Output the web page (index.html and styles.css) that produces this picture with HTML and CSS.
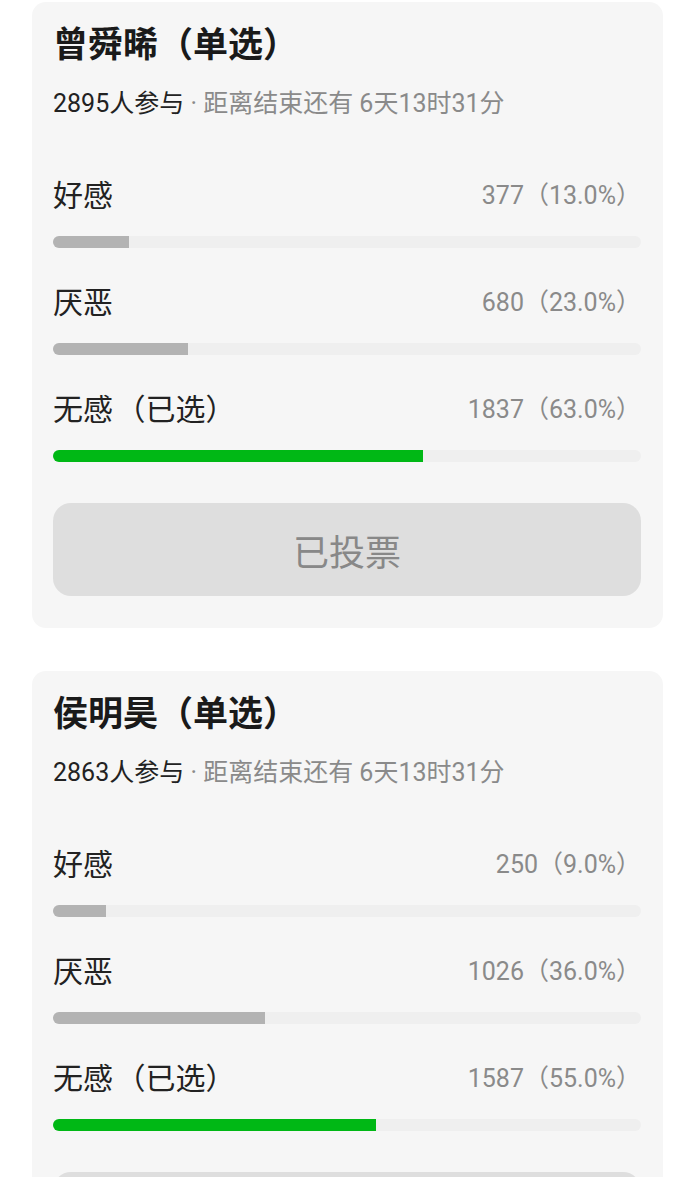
FILE: index.html
```html
<!DOCTYPE html>
<html lang="zh">
<head>
<meta charset="utf-8">
<title>投票</title>
<link rel="stylesheet" href="styles.css">
</head>
<body>
<div class="page">
  <section class="card">
    <h2 class="title">曾舜晞（单选）</h2>
    <p class="meta"><span class="count">2895人参与</span><span class="rest"> · 距离结束还有 6天13时31分</span></p>
    <div class="option">
      <div class="row"><span class="label">好感</span><span class="value">377（13.0%）</span></div>
      <div class="track"><div class="fill" style="width:13%"></div></div>
    </div>
    <div class="option">
      <div class="row"><span class="label">厌恶</span><span class="value">680（23.0%）</span></div>
      <div class="track"><div class="fill" style="width:23%"></div></div>
    </div>
    <div class="option">
      <div class="row"><span class="label">无感 （已选）</span><span class="value">1837（63.0%）</span></div>
      <div class="track"><div class="fill chosen" style="width:63%"></div></div>
    </div>
    <div class="btn">已投票</div>
  </section>
  <section class="card">
    <h2 class="title">侯明昊（单选）</h2>
    <p class="meta"><span class="count">2863人参与</span><span class="rest"> · 距离结束还有 6天13时31分</span></p>
    <div class="option">
      <div class="row"><span class="label">好感</span><span class="value">250（9.0%）</span></div>
      <div class="track"><div class="fill" style="width:9%"></div></div>
    </div>
    <div class="option">
      <div class="row"><span class="label">厌恶</span><span class="value">1026（36.0%）</span></div>
      <div class="track"><div class="fill" style="width:36%"></div></div>
    </div>
    <div class="option">
      <div class="row"><span class="label">无感 （已选）</span><span class="value">1587（55.0%）</span></div>
      <div class="track"><div class="fill chosen" style="width:55%"></div></div>
    </div>
    <div class="btn">已投票</div>
  </section>
</div>
</body>
</html>
```

FILE: styles.css
```css
* { box-sizing: border-box; }
html, body {
  margin: 0;
  padding: 0;
  background: #ffffff;
}
body {
  font-family: Roboto, "Noto Sans CJK SC", sans-serif;
  color: #222222;
}
.page {
  display: flex;
  flex-direction: column;
  gap: 43px;
  padding: 2px 27px 40px 32px;
}
.card {
  background: #f6f6f6;
  border-radius: 14px;
  padding: 22px 22px 32px 21px;
}
.title {
  margin: 0;
  font-size: 35px;
  line-height: 44px;
  font-weight: 700;
  color: #1a1a1a;
}
.meta {
  margin: 21px 0 0;
  font-size: 25px;
  line-height: 30px;
}
.meta .count { color: #222222; }
.meta .rest { color: #8a8a8a; }
.option { margin-top: 32px; }
.meta + .option { margin-top: 54px; }
.row {
  display: flex;
  justify-content: space-between;
  align-items: center;
  height: 40px;
}
.label {
  font-size: 30px;
  color: #222222;
  word-spacing: -5px;
}
.value {
  font-size: 25px;
  color: #8a8a8a;
}
.track {
  margin-top: 23px;
  height: 12px;
  border-radius: 6px;
  background: #efefef;
  overflow: hidden;
}
.fill {
  height: 100%;
  background: #b3b3b3;
}
.fill.chosen { background: #00b815; }
.btn {
  margin-top: 41px;
  height: 93px;
  border-radius: 18px;
  background: #dedede;
  color: #888888;
  font-size: 36px;
  display: flex;
  align-items: center;
  justify-content: center;
}
```
